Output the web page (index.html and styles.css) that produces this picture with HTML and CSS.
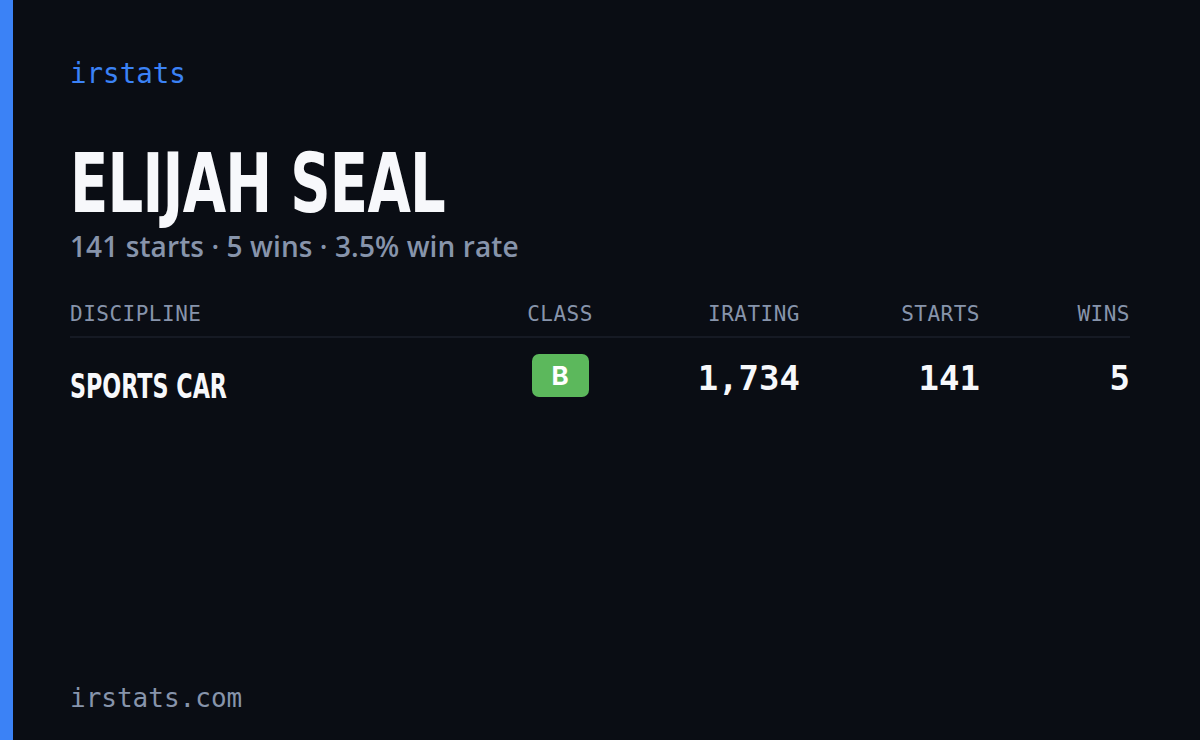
FILE: index.html
```html
<!DOCTYPE html>
<html lang="en">
<head>
<meta charset="utf-8">
<title>irstats — Elijah Seal</title>
<link rel="stylesheet" href="styles.css">
</head>
<body>
<div class="card">
  <div class="accent"></div>
  <main class="content">
    <div class="brand">irstats</div>
    <h1 class="name"><span class="cond">ELIJAH SEAL</span></h1>
    <p class="summary">141 starts · 5 wins · 3.5% win rate</p>
    <div class="table">
      <div class="row head">
        <div class="cell left">DISCIPLINE</div>
        <div class="cell center">CLASS</div>
        <div class="cell right">IRATING</div>
        <div class="cell right">STARTS</div>
        <div class="cell right">WINS</div>
      </div>
      <div class="row body">
        <div class="cell left disc"><span class="cond">SPORTS CAR</span></div>
        <div class="cell center"><span class="badge">B</span></div>
        <div class="cell right num">1,734</div>
        <div class="cell right num">141</div>
        <div class="cell right num">5</div>
      </div>
    </div>
    <div class="footer">irstats.com</div>
  </main>
</div>
</body>
</html>
```

FILE: styles.css
```css
html, body {
  margin: 0;
  padding: 0;
  background: #0a0d14;
}
.card {
  display: flex;
  width: 1200px;
  height: 740px;
  background: #0a0d14;
  overflow: hidden;
}
.accent {
  width: 13px;
  flex: none;
  background: #3b82f6;
}
.content {
  flex: 1;
  display: flex;
  flex-direction: column;
  padding: 0 70px 0 57px;
}
.brand {
  font-family: "DejaVu Sans Mono", monospace;
  font-size: 27.5px;
  color: #3b82f6;
  margin-top: 55px;
  line-height: 36px;
}
.cond {
  display: inline-block;
  transform-origin: left center;
}
.name {
  margin: 51px 0 0 0;
  font-family: "DejaVu Sans Condensed", "DejaVu Sans", sans-serif;
  font-weight: bold;
  font-size: 82px;
  line-height: 84px;
  color: #f7f8fb;
  letter-spacing: -1px;
}
.name .cond {
  transform: scaleX(0.76);
}
.summary {
  margin: 2px 0 0 0;
  font-family: "Open Sans", sans-serif;
  font-weight: 600;
  font-size: 28px;
  line-height: 36px;
  color: #8794ab;
  letter-spacing: 0.1px;
}
.table {
  margin-top: 34px;
}
.row {
  display: grid;
  grid-template-columns: 430px 120px 180px 180px 150px;
  align-items: center;
}
.head {
  height: 38px;
  border-bottom: 2px solid #161a24;
  font-family: "DejaVu Sans Mono", monospace;
  font-size: 21px;
  color: #8794ab;
  letter-spacing: 0.5px;
}
.head .cell {
  padding-bottom: 6px;
}
.body {
  height: 84px;
}
.cell.left { text-align: left; }
.cell.center { text-align: center; }
.cell.right { text-align: right; }
.disc {
  font-family: "DejaVu Sans Condensed", "DejaVu Sans", sans-serif;
  font-weight: bold;
  font-size: 33px;
  color: #f7f8fb;
  padding-top: 12px;
}
.disc .cond {
  transform: scaleX(0.75);
}
.badge {
  display: inline-flex;
  align-items: center;
  justify-content: center;
  width: 57px;
  height: 43px;
  border-radius: 7px;
  background: #5cb85c;
  color: #ffffff;
  font-family: "Inter", sans-serif;
  font-weight: 700;
  font-size: 26px;
  margin-top: -9px;
}
.num {
  font-family: "DejaVu Sans Mono", monospace;
  font-weight: bold;
  font-size: 34px;
  color: #f7f8fb;
  margin-top: -4px;
}
.footer {
  margin-top: auto;
  margin-bottom: 24px;
  font-family: "DejaVu Sans Mono", monospace;
  font-size: 26px;
  line-height: 36px;
  color: #8794ab;
}
```
